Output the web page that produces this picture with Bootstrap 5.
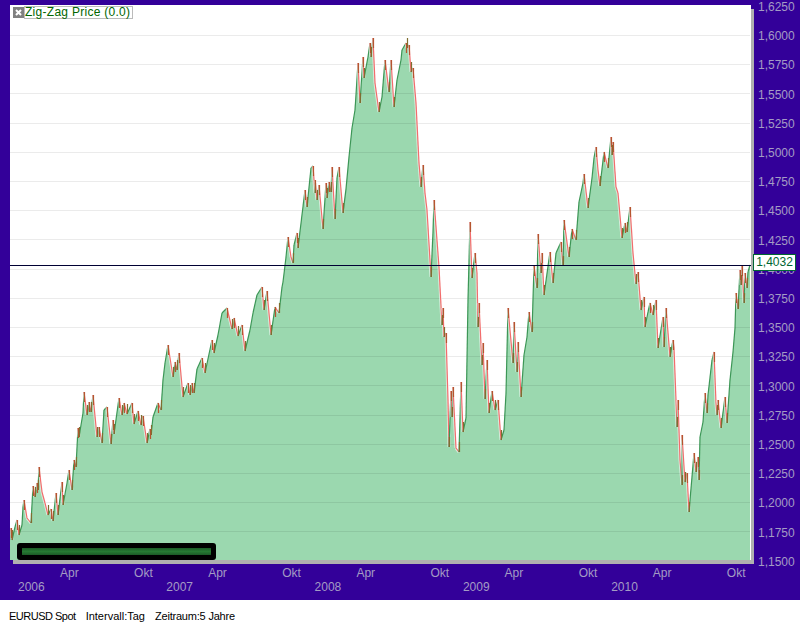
<!DOCTYPE html>
<html lang="de">
<head>
    <meta charset="UTF-8">
    <meta name="viewport" content="width=device-width, initial-scale=1.0">
    <title>EURUSD Spot</title>
    <link href="https://cdn.jsdelivr.net/npm/bootstrap@5.3.0/dist/css/bootstrap.min.css" rel="stylesheet">
    <style>
        html, body { height: 625px; overflow: hidden; background: #fff; }
        body { font-family: "Liberation Sans", Arial, sans-serif; font-size: 12px; }
        .chart-panel { height: 600px; background: #330099; color: #a49cc4; }
        .plot-row { height: 560px; padding: 5px 0 0 10px; }
        .plot { width: 741px; height: 555px; background: #fff; box-shadow: 3px 4px 0 #b0b0b0; }
        .plot svg { display: block; }
        .legend { left: 3px; top: 1px; }
        .legend-close { width: 11px; height: 11px; margin-top: 1px; background: #808080; }
        .legend-label { height: 13px; padding-right: 2px; line-height: 11px; letter-spacing: .28px; border: 1px solid #bbb; color: #006600; background: #fff; }
        .scroll-bar { left: 7px; top: 538px; width: 199px; height: 17px; padding: 5px; background: #000; border-radius: 3px; }
        .scroll-bar div { height: 7px; background: linear-gradient(#1b5a26, #267a33 50%, #1b5a26); }
        .y-axis { width: 49px; height: 555px; margin-top: -12px; padding-left: 7px; }
        .y-axis div { flex: 0 0 29.2px; line-height: 29.2px; }
        .x-row { height: 14px; line-height: 14px; }
        .x-months { padding: 6px 0 0 60px; height: 20px; }
        .x-years { padding-left: 18px; }
        .x-months span { flex: 0 0 74.1px; }
        .x-years span { flex: 0 0 148.3px; }
        .price-tag { left: 753px; top: 254px; width: 43px; height: 17px; line-height: 15px; border: 1px solid #006633; background: #fff; color: #006633; }
        .status-bar { height: 25px; padding: 7px 0 0 9px; gap: 10px; font-size: 11px; color: #000; }
        .status-symbol { letter-spacing: -.5px; }
        .status-range { letter-spacing: -.2px; }
    </style>
</head>
<body>
    <div class="chart-panel position-relative">
        <div class="plot-row d-flex">
            <div class="plot position-relative flex-shrink-0">
                <svg id="chart" width="741" height="555" viewBox="10 5 741 555"></svg>
                <div class="legend position-absolute d-flex align-items-start">
                    <svg class="legend-close flex-shrink-0" viewBox="0 0 11 11"><path d="M3 3l5 5M8 3l-5 5" stroke="#fff" stroke-width="2"/></svg>
                    <span class="legend-label text-nowrap">Zig-Zag Price (0.0)</span>
                </div>
                <div class="scroll-bar position-absolute"><div></div></div>
            </div>
            <div class="y-axis d-flex flex-column flex-shrink-0" id="yAxis"></div>
        </div>
        <div class="x-row x-months d-flex">
            <span>Apr</span><span>Okt</span><span>Apr</span><span>Okt</span><span>Apr</span><span>Okt</span><span>Apr</span><span>Okt</span><span>Apr</span><span>Okt</span>
        </div>
        <div class="x-row x-years d-flex">
            <span>2006</span><span>2007</span><span>2008</span><span>2009</span><span>2010</span>
        </div>
        <div class="price-tag position-absolute text-center">1,4032</div>
    </div>
    <div class="status-bar d-flex align-items-center">
        <span class="status-symbol">EURUSD Spot</span><span>Intervall:Tag</span><span class="status-range">Zeitraum:5 Jahre</span>
    </div>

    <script>
        // traced price curve, screen x / y
        const points = [
            [10,540],[11,528],[12,540],[15,527],[17,520],[19,535],[22,525],[23,507],[24,500],[27,518],[31,523],[33,486],[35,497],[37,483],[38,490],[39,467],
            [42,492],[45,503],[48,515],[51,509],[53,521],[56,493],[58,515],[62,482],[63,505],[67,483],[69,470],[72,490],[74,460],[76,467],[78,428],[79,437],
            [83,413],[84,392],[87,415],[89,402],[91,412],[93,395],[97,437],[99,427],[102,443],[104,410],[107,407],[111,444],[113,420],[114,434],[119,398],
            [122,415],[124,403],[127,414],[132,403],[134,424],[138,411],[141,425],[143,416],[147,443],[150,429],[151,435],[153,417],[158,403],[161,410],
            [163,380],[165,363],[168,345],[173,377],[175,362],[177,370],[179,353],[183,397],[188,383],[190,395],[192,383],[194,393],[197,369],[202,358],
            [205,373],[212,340],[214,353],[218,335],[222,313],[227,308],[232,329],[234,318],[238,336],[242,325],[245,351],[250,330],[253,313],[257,295],
            [262,287],[264,310],[267,291],[271,335],[275,307],[279,313],[282,287],[283,282],[286,257],[288,237],[291,257],[293,263],[294,245],[297,233],
            [298,248],[305,190],[307,207],[311,168],[313,166],[315,193],[315,180],[317,200],[319,185],[323,229],[326,183],[327,198],[329,182],[331,192],
            [332,167],[335,219],[337,178],[339,167],[343,213],[346,189],[349,157],[352,128],[355,110],[358,63],[360,103],[363,57],[364,78],[368,57],[370,43],
            [371,57],[373,38],[375,83],[379,112],[382,97],[385,60],[389,92],[391,60],[394,107],[397,80],[401,60],[402,50],[406,43],[407,48],[409,45],
            [411,72],[413,68],[416,103],[419,163],[421,187],[423,165],[425,193],[427,210],[431,277],[433,232],[434,200],[439,267],[442,325],[443,308],
            [444,337],[446,333],[448,400],[449,447],[451,391],[452,417],[453,387],[456,448],[459,452],[461,382],[463,432],[466,418],[468,300],[470,222],
            [472,278],[475,253],[477,273],[478,327],[479,303],[482,365],[483,343],[485,399],[487,360],[489,413],[492,391],[495,410],[498,400],[501,440],
            [504,430],[506,393],[508,308],[513,363],[514,322],[517,372],[518,342],[521,397],[524,355],[527,337],[529,312],[532,332],[534,266],[537,288],
            [538,234],[541,273],[542,253],[544,295],[550,252],[553,283],[556,253],[561,242],[563,266],[564,220],[569,257],[572,229],[576,240],[579,202],
            [583,183],[584,174],[588,208],[592,178],[594,158],[596,147],[598,170],[600,186],[604,152],[608,168],[611,137],[612,155],[613,142],[616,187],
            [618,193],[622,238],[625,223],[627,232],[630,207],[633,253],[636,284],[638,272],[641,310],[644,297],[645,327],[648,312],[650,303],[653,315],
            [656,300],[658,348],[663,317],[664,347],[666,308],[670,357],[673,340],[674,348],[676,400],[677,427],[678,400],[680,460],[682,485],[682,435],
            [685,482],[687,473],[689,512],[693,465],[694,453],[696,472],[698,457],[699,480],[700,437],[703,422],[705,393],[707,413],[708,395],[712,360],
            [714,352],[716,403],[717,415],[718,400],[721,428],[725,397],[727,423],[730,380],[733,352],[735,328],[736,293],[738,309],[740,270],[741,285],
            [742,266],[744,303],[745,273],[747,288],[748,272],[750,265]
        ];

        const ns = 'http://www.w3.org/2000/svg';
        const chart = document.getElementById('chart');

        function add(tag, attrs) {
            const el = document.createElementNS(ns, tag);
            Object.entries(attrs).forEach(([k, v]) => el.setAttribute(k, v));
            chart.appendChild(el);
        }

        add('polygon', { points: points.map(p => p.join(',')).join(' ') + ' 750,560 10,560', fill: '#9bd8af' });

        // grid lines sit over the fill
        for (let k = 0; k < 18; k++) {
            const y = Math.round(35 + 29.2 * k) + 0.5;
            add('line', { x1: 10, x2: 750, y1: y, y2: y, stroke: '#000', 'stroke-opacity': 0.08 });
        }

        for (let i = 1; i < points.length; i++) {
            const [x1, y1] = points[i - 1];
            const [x2, y2] = points[i];
            const down = y2 > y1;
            if (down) add('line', { x1, y1, x2, y2, stroke: '#fff', 'stroke-opacity': 0.6, 'stroke-width': 3 });
            add('line', { x1, y1, x2, y2, stroke: down ? '#f26c6c' : '#3c9656', 'stroke-width': 1.2 });
        }

        // dark ticks on the highs and lows
        for (let i = 1; i < points.length - 1; i++) {
            const [x, y] = points[i];
            if (y < points[i - 1][1] && y < points[i + 1][1]) {
                add('line', { x1: x + 0.5, x2: x + 0.5, y1: y, y2: y + 10, stroke: '#b5552f', 'stroke-width': 1.2 });
            } else if (y > points[i - 1][1] && y > points[i + 1][1]) {
                add('line', { x1: x + 0.5, x2: x + 0.5, y1: y - 10, y2: y, stroke: '#7f6d30', 'stroke-width': 1.2 });
            }
        }

        add('line', { x1: 10, x2: 751, y1: 265.5, y2: 265.5, stroke: '#000033', 'stroke-width': 1.2 });

        // price scale 1,6250 .. 1,1500
        const yAxis = document.getElementById('yAxis');
        for (let k = 0; k < 20; k++) {
            const label = document.createElement('div');
            label.textContent = (1.625 - 0.025 * k).toFixed(4).replace('.', ',');
            yAxis.appendChild(label);
        }
    </script>
    <script src="https://cdn.jsdelivr.net/npm/bootstrap@5.3.0/dist/js/bootstrap.bundle.min.js"></script>
</body>
</html>
